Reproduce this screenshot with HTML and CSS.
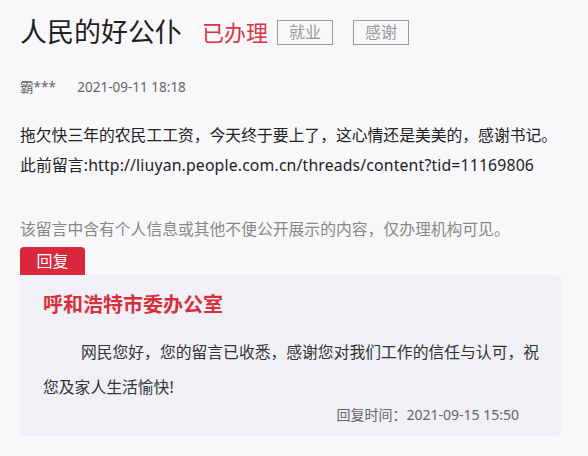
FILE: index.html
```html
<!DOCTYPE html>
<html lang="zh-CN">
<head>
<meta charset="utf-8">
<title>人民的好公仆</title>
<link rel="stylesheet" href="styles.css">
</head>
<body>
<div class="page">
  <div class="header">
    <h1 class="title">人民的好公仆</h1>
    <span class="status">已办理</span>
    <span class="tag">就业</span>
    <span class="tag">感谢</span>
  </div>
  <div class="meta">
    <span class="author">霸***</span>
    <span class="date">2021-09-11 18:18</span>
  </div>
  <div class="content">
    <p>拖欠快三年的农民工工资，今天终于要上了，这心情还是美美的，感谢书记。</p>
    <p class="link-line">此前留言:http://liuyan.people.com.cn/threads/content?tid=11169806</p>
  </div>
  <p class="notice">该留言中含有个人信息或其他不便公开展示的内容，仅办理机构可见。</p>
  <div class="reply-tab">回复</div>
  <div class="reply-card">
    <div class="reply-org">呼和浩特市委办公室</div>
    <p class="reply-text">网民您好，您的留言已收悉，感谢您对我们工作的信任与认可，祝您及家人生活愉快!</p>
    <div class="reply-time">回复时间：2021-09-15 15:50</div>
  </div>
</div>
</body>
</html>
```
FILE: styles.css
```css
* { box-sizing: border-box; }
html, body {
  margin: 0;
  padding: 0;
  background: #f8f7fa;
}
body {
  font-family: "Noto Sans", "Noto Sans CJK SC", sans-serif;
  color: #222;
}
.page {
  padding: 17px 0 0 20px;
  width: 588px;
}
.header {
  display: flex;
  align-items: center;
  height: 30px;
}
.title {
  margin: 0;
  font-size: 27px;
  font-weight: normal;
  line-height: 30px;
  color: #1f1f24;
}
.status {
  margin-left: 20px;
  font-size: 22px;
  line-height: 30px;
  color: #d73540;
}
.tag {
  margin-left: 9px;
  width: 56px;
  height: 25px;
  border: 1px solid #9a9a9a;
  color: #999;
  font-size: 16px;
  line-height: 23px;
  text-align: center;
}
.tag + .tag { margin-left: 20px; }
.meta {
  margin-top: 30px;
  font-size: 13.5px;
  line-height: 20px;
  color: #666;
}
.date { margin-left: 18px; }
.content {
  margin-top: 23px;
  font-size: 15.8px;
  line-height: 30px;
  color: #222;
}
.content p { margin: 0; }
.content .link-line { letter-spacing: 0.15px; }
.notice {
  margin: 34px 0 0;
  font-size: 15.8px;
  line-height: 30px;
  color: #888;
}
.reply-tab {
  margin-top: 3px;
  width: 65px;
  height: 28px;
  background: #d9273b;
  color: #fff;
  border-radius: 4px 4px 0 0;
  font-size: 16px;
  line-height: 28px;
  text-align: center;
}
.reply-card {
  width: 541px;
  background: #f0f0f6;
  border-radius: 0 4px 4px 4px;
  padding: 15px 18px 11px 23px;
}
.reply-org {
  font-size: 20px;
  font-weight: bold;
  line-height: 30px;
  color: #d7303d;
}
.reply-text {
  margin: 15px 0 0;
  font-size: 15.8px;
  line-height: 35px;
  text-indent: 2.4em;
  color: #333;
}
.reply-time {
  margin-right: 24px;
  text-align: right;
  font-size: 14px;
  line-height: 20px;
  color: #666;
}
```
